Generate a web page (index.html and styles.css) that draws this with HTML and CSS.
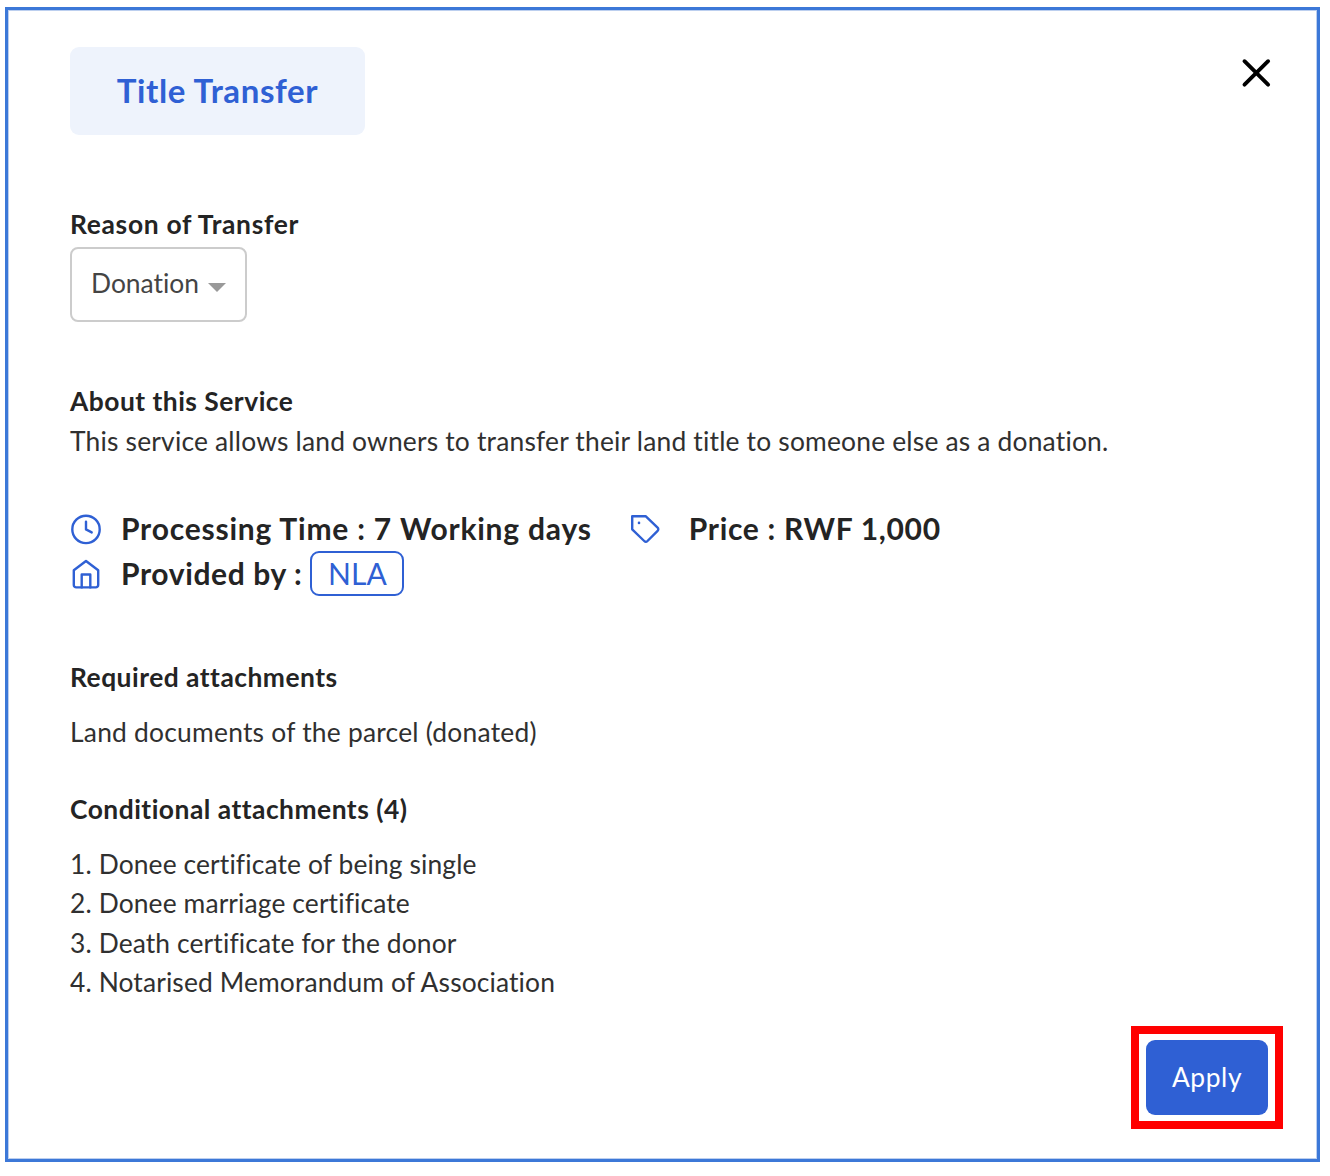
FILE: index.html
```html
<!DOCTYPE html>
<html lang="en">
<head>
    <meta charset="UTF-8">
    <meta name="viewport" content="width=device-width, initial-scale=1.0">
    <title>Title Transfer</title>
    <link rel="stylesheet" href="styles.css">
</head>
<body>
    <div class="modal">
        <div class="modal-header">
            <h1 class="service-title">Title Transfer</h1>
            <button class="close-btn" aria-label="Close">
                <svg width="30" height="30" viewBox="0 0 30 30" fill="none" stroke="#000" stroke-width="3.9" stroke-linecap="round">
                    <path d="M3.5 3.2l23.6 23.4M27.1 3.2L3.5 26.6"/>
                </svg>
            </button>
        </div>

        <div class="reason">
            <h2 class="heading reason-label">Reason of Transfer</h2>
            <button class="select">
                <span class="select-value">Donation</span>
                <span class="select-arrow"></span>
            </button>
        </div>

        <div class="about">
            <h2 class="heading about-title">About this Service</h2>
            <p class="text about-text">This service allows land owners to transfer their land title to someone else as a donation.</p>
        </div>

        <div class="details">
            <div class="detail">
                <svg class="icon" viewBox="0 0 32 32">
                    <circle cx="16" cy="16.4" r="13.7"/>
                    <path d="M16 8.6v7.8l5.7 3"/>
                </svg>
                <span class="detail-text time">Processing Time : 7 Working days</span>
            </div>
            <div class="detail detail-price">
                <svg class="icon" viewBox="0 0 32 32">
                    <path d="M3.2 3.2h13.4l12 11.5a2.2 2.2 0 0 1 0 3.2L18.5 28a2.4 2.4 0 0 1-3.3 0L3.2 16.3z"/>
                    <circle class="dot" cx="10" cy="9.9" r="1.3"/>
                </svg>
                <span class="detail-text price">Price : RWF 1,000</span>
            </div>
            <div class="detail detail-provider">
                <svg class="icon" viewBox="0 0 32 32">
                    <path d="M3.8 12.2L16 3l12.2 9.2V27a2.4 2.4 0 0 1-2.4 2.4H6.2A2.4 2.4 0 0 1 3.8 27z"/>
                    <path d="M11.7 29.4V16.5h8.6v12.9"/>
                </svg>
                <span class="detail-text provider">Provided by :</span>
                <span class="badge">NLA</span>
            </div>
        </div>

        <div class="attachments">
            <h2 class="heading required-title">Required attachments</h2>
            <p class="text required-text">Land documents of the parcel (donated)</p>
            <h2 class="heading conditional-title">Conditional attachments (4)</h2>
            <ol class="text conditional-list">
                <li>Donee certificate of being single</li>
                <li>Donee marriage certificate</li>
                <li>Death certificate for the donor</li>
                <li>Notarised Memorandum of Association</li>
            </ol>
        </div>

        <div class="modal-footer">
            <div class="highlight">
                <button class="apply-btn">Apply</button>
            </div>
        </div>
    </div>
</body>
</html>
```
FILE: styles.css
```css
* {
    box-sizing: border-box;
}
body {
    margin: 0;
    padding: 7px 10px 14px 5px;
    height: 1176px;
    background: #fff;
    color: #242424;
    font-family: Lato, "Open Sans", sans-serif;
    font-size: 26.4px;
    line-height: 39.6px;
}
h1, h2, p, ol {
    margin: 0;
}
button {
    font: inherit;
    padding: 0;
}
.modal {
    height: 1155px;
    padding: 37px 34px 30px 62px;
    border: 3px solid #3c78d8;
    box-shadow: inset 0 0 0 1px #bccfef;
}
.modal-header {
    display: flex;
    justify-content: space-between;
    align-items: flex-start;
}
.service-title {
    display: flex;
    align-items: center;
    justify-content: center;
    width: 295px;
    height: 88px;
    border-radius: 9px;
    background: #eef3fc;
    color: #2f60d4;
    font-size: 33px;
    font-weight: bold;
    letter-spacing: 0.6px;
}
.close-btn {
    margin: 11px 12px 0 0;
    border: none;
    background: none;
    line-height: 0;
}
.heading {
    font-size: 26.4px;
    font-weight: bold;
    letter-spacing: 0.49px;
}
.text {
    color: #303030;
    letter-spacing: 0.19px;
}
.reason {
    margin-top: 70px;
}
.reason-label {
    letter-spacing: 0.68px;
}
.select {
    display: flex;
    align-items: center;
    width: 177px;
    height: 75px;
    margin-top: 2px;
    padding: 0 19px;
    border: 2px solid #ccc;
    border-radius: 8px;
    background: #fff;
    color: #444;
    font-variant-ligatures: none;
}
.select-value {
    flex: 1;
    text-align: left;
}
.select-arrow {
    margin-top: 6px;
    border: 9px solid transparent;
    border-top-color: #999;
    border-bottom: none;
}
.about {
    margin-top: 60px;
}
.about-text {
    margin-top: 0.5px;
}
.details {
    display: flex;
    flex-wrap: wrap;
    margin-top: 45px;
    font-size: 30px;
}
.detail {
    display: flex;
    align-items: center;
    height: 45px;
}
.icon {
    width: 32px;
    height: 32px;
    margin-top: 1px;
    margin-right: 19px;
    fill: none;
    stroke: #2f60d4;
    stroke-width: 2.4;
    stroke-linecap: round;
    stroke-linejoin: round;
}
.icon .dot {
    fill: #2f60d4;
    stroke: none;
}
.detail-text {
    font-weight: bold;
}
.time {
    letter-spacing: 0.79px;
}
.price {
    letter-spacing: 0.7px;
}
.provider {
    letter-spacing: 0.62px;
}
.detail-price {
    margin-left: 37px;
}
.detail-price .icon {
    margin-right: 28px;
}
.detail-provider {
    width: 100%;
}
.badge {
    display: flex;
    align-items: center;
    justify-content: center;
    width: 94px;
    height: 45px;
    margin-left: 8px;
    border: 2px solid #2f60d4;
    border-radius: 9px;
    color: #2f60d4;
}
.attachments {
    margin-top: 62px;
}
.required-text {
    margin-top: 15.5px;
    letter-spacing: 0.23px;
}
.conditional-title {
    margin-top: 37px;
}
.conditional-list {
    margin-top: 15px;
    padding: 0;
    list-style-position: inside;
    letter-spacing: 0.12px;
}
.modal-footer {
    display: flex;
    justify-content: flex-end;
    margin-top: 23px;
}
.highlight {
    padding: 6px 7px;
    border: 8px solid #f00;
}
.apply-btn {
    display: block;
    width: 122px;
    height: 75px;
    border: none;
    border-radius: 9px;
    background: #2f60d4;
    color: #fff;
    letter-spacing: 0.6px;
}
```
